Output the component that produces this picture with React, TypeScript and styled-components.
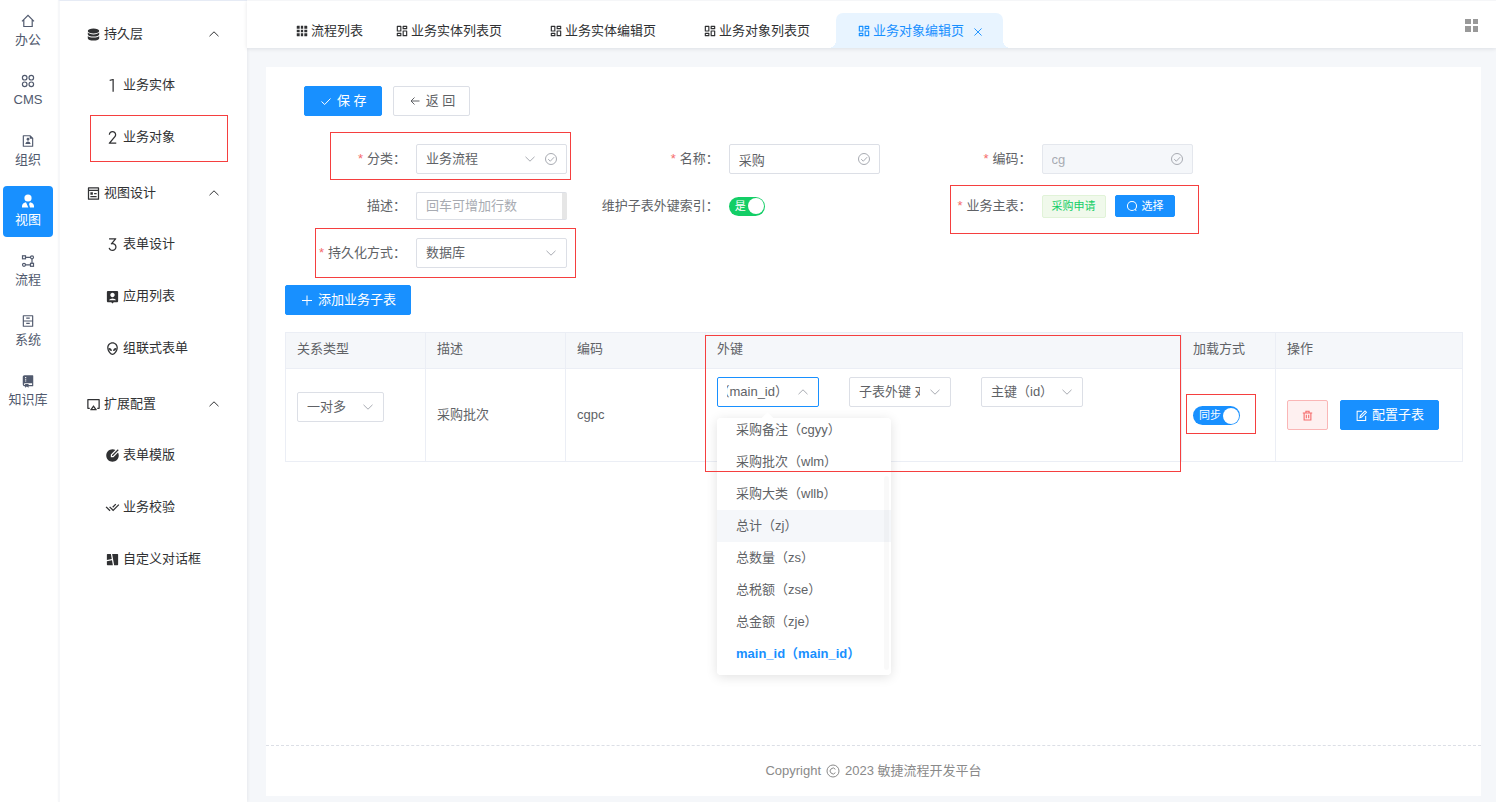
import React, { useState } from "react";
import styled, { createGlobalStyle, css } from "styled-components";
import {
  RiAccountPinBoxFill,
  RiAirplayLine,
  RiAliensLine,
  RiArchiveDrawerLine,
  RiCheckDoubleLine,
  RiCollageFill,
  RiDashboardLine,
  RiEditCircleFill,
  RiFileUserLine,
  RiGitRepositoryFill,
  RiGridFill,
  RiNumber1,
  RiNumber2,
  RiNumber3,
  RiPagesLine,
} from "react-icons/ri";

const color = {
  primary: "#1890ff",
  success: "#13ce66",
  danger: "#f56c6c",
  mark: "#f53f3f",
  text: "#606266",
  dark: "#303133",
  muted: "#a8abb2",
  border: "#dcdfe6",
  line: "#ebeef5",
  page: "#f5f7fa",
};

const GlobalStyle = createGlobalStyle`
  * { box-sizing: border-box; }
  body {
    margin: 0;
    background: ${color.page};
    color: ${color.text};
    font: 13px/20px "Liberation Sans", "Noto Sans CJK SC", sans-serif;
  }
  button, input, select, textarea { font: inherit; color: inherit; }
  ul { list-style: none; margin: 0; padding: 0; }
  a { color: inherit; text-decoration: none; }
  svg { flex: none; display: block; }
`;

/* ---------- icons ---------- */

const Stroke = ({ size = 14, width = 1, children }: { size?: number; width?: number; children: React.ReactNode }) => (
  <svg
    width={size}
    height={size}
    viewBox="0 0 14 14"
    fill="none"
    stroke="currentColor"
    strokeWidth={width}
    aria-hidden="true"
  >
    {children}
  </svg>
);

const ChevronDown = () => <Stroke><path d="M2.500 4.800 7 9.200l4.500-4.400" /></Stroke>;
const ChevronUp = () => <Stroke><path d="M2.500 9.200 7 4.800l4.500 4.400" /></Stroke>;
const CheckIcon = () => <Stroke><path d="M2.500 7.500 5.700 10.500 11.500 4.500" /></Stroke>;
const BackIcon = () => <Stroke><path d="M11.500 7H3M6.500 3.500 3 7l3.500 3.500" /></Stroke>;
const PlusIcon = () => <Stroke><path d="M7 2.500v10M2 7.500h10" /></Stroke>;
const CloseIcon = () => <Stroke size={10} width={1.3}><path d="M2 2l10 10M12 2 2 12" /></Stroke>;
const CircleCheck = () => (
  <Stroke>
    <circle cx="7" cy="7" r="5.500" />
    <path d="M4.200 7.200 6.300 9.200l3.800-4" />
  </Stroke>
);
const SearchIcon = () => (
  <Stroke size={12} width={1.2}>
    <circle cx="7" cy="7" r="5.300" />
    <path d="M10.500 10.800 12 12.400" />
  </Stroke>
);
const TrashIcon = () => (
  <Stroke size={11} width={1.4}>
    <path d="M1 3.800h12M5 3.800V1.500h4v2.300M2.700 3.800v9h8.600v-9M5.500 6v4.500M8.500 6v4.500" />
  </Stroke>
);
const EditIcon = () => (
  <Stroke size={13} width={1.1}>
    <path d="M7.500 2.500H2.300v9.800h9.200V7.500M5.300 9.300l.4-2L10.800 2 12.300 3.500 7.200 8.700z" />
  </Stroke>
);
const HomeIcon = () => (
  <Stroke width={1.200}>
    <path d="M1 7.300 7 1.300l6 6M2.800 6v6.500h8.400V6" />
  </Stroke>
);
const CirclesIcon = () => (
  <Stroke width={1.200}>
    <circle cx="3.700" cy="3.700" r="2.300" />
    <circle cx="10.300" cy="3.700" r="2.300" />
    <circle cx="3.700" cy="10.300" r="2.300" />
    <circle cx="10.300" cy="10.300" r="2.300" />
  </Stroke>
);
const FlowIcon = () => (
  <Stroke width={1.200}>
    <rect x="1.500" y="1.800" width="3" height="3" />
    <circle cx="11" cy="3.300" r="1.500" />
    <circle cx="3" cy="10.800" r="1.500" />
    <rect x="9.500" y="9.300" width="3" height="3" />
    <path d="M4.500 3.300h5M11 4.800v4.500M4.500 10.800h5" />
  </Stroke>
);
const PersonIcon = () => (
  <svg width="14" height="14" viewBox="0 0 14 14" fill="currentColor" aria-hidden="true">
    <circle cx="7" cy="4" r="3.600" />
    <path d="M5 8.200 7.300 13.500H1V12c0-2 1.800-3.600 4-3.800zM9 8.200 8 10l1 3.500h4V12c0-2-1.800-3.600-4-3.800z" />
  </svg>
);
const DisksIcon = () => (
  <svg width="15" height="15" viewBox="0 0 15 15" fill="currentColor" aria-hidden="true">
    <ellipse cx="7.500" cy="3.900" rx="5.700" ry="2.500" />
    <path d="M1.800 5.600c1 1.200 3.200 1.800 5.700 1.800s4.700-.6 5.700-1.800v1.600c0 1.300-2.500 2.400-5.700 2.400S1.800 8.500 1.800 7.200zM1.800 8.900c1 1.100 3.200 1.700 5.700 1.700s4.700-.6 5.700-1.700v2.300c0 1.300-2.500 2.400-5.700 2.400s-5.700-1.100-5.700-2.400z" />
  </svg>
);
const CopyrightIcon = () => (
  <Stroke>
    <circle cx="7" cy="7" r="6" />
    <path d="M9.400 5.300a2.900 2.900 0 1 0 0 3.400" />
  </Stroke>
);
const TilesIcon = () => (
  <svg width="13" height="13" viewBox="0 0 13 13" fill="#999" aria-hidden="true">
    <path d="M0 0h6v5H0zM8 0h5v5H8zM0 7h6v6H0zM8 7h5v6H8z" />
  </svg>
);

/* ---------- shell ---------- */

const Shell = styled.div`
  display: flex;
  min-height: 100vh;
`;

const Rail = styled.nav`
  display: flex;
  flex-direction: column;
  gap: 9px;
  width: 58px;
  flex: none;
  padding: 6px 5px 6px 3px;
  background: #fff;
`;

const RailLink = styled.a<{ $active?: boolean }>`
  display: flex;
  flex-direction: column;
  align-items: center;
  gap: 2px;
  height: 51px;
  padding-top: 8px;
  border-radius: 4px;
  color: ${(p) => (p.$active ? "#fff" : "#515a6e")};
  background: ${(p) => (p.$active ? color.primary : "transparent")};
`;

const Side = styled.nav`
  width: 189px;
  flex: none;
  padding-top: 8px;
  background: #fff;
  border-top: 1px solid #e6ebf5;
  border-left: 2px solid #f6f7f9;
  box-shadow: 1px 0 3px rgba(0, 21, 41, 0.06);
  color: ${color.dark};
`;

const Group = styled.section`
  margin-bottom: 5px;
`;

const GroupHead = styled.button`
  display: flex;
  align-items: center;
  gap: 3px;
  width: 100%;
  height: 50px;
  padding: 0 26px;
  border: 0;
  background: none;
  text-align: left;
  span { flex: 1; }
`;

const SideLink = styled.a`
  position: relative;
  display: flex;
  align-items: center;
  gap: 3px;
  height: 52px;
  padding-left: 45px;
`;

const Marker = styled.i<{ $inset: string }>`
  position: absolute;
  inset: ${(p) => p.$inset};
  border: 1px solid ${color.mark};
  pointer-events: none;
  z-index: 5;
`;

const Column = styled.div`
  display: flex;
  flex-direction: column;
  flex: 1;
  min-width: 0;
`;

const TopBar = styled.header`
  display: flex;
  align-items: flex-end;
  justify-content: space-between;
  height: 48px;
  padding: 0 18px 0 32px;
  background: #fff;
  border-top: 1px solid #f5f6f8;
  box-shadow: 0 1px 4px rgba(0, 21, 41, 0.1);
`;

const Tabs = styled.nav`
  display: flex;
`;

const Tab = styled.a<{ $active?: boolean; $fixed?: boolean }>`
  position: relative;
  display: flex;
  align-items: center;
  gap: 2px;
  height: 35px;
  padding: 0 ${(p) => (p.$fixed ? 16 : 31)}px 0 16px;
  color: ${color.dark};
  white-space: nowrap;
  ${(p) =>
    p.$active &&
    css`
      margin-left: -5px;
      padding: 0 20px 0 21px;
      border-radius: 7px 7px 0 0;
      background: #e8f4ff;
      color: ${color.primary};
      &::before,
      &::after {
        content: "";
        position: absolute;
        bottom: 0;
        width: 8px;
        height: 8px;
      }
      &::before {
        right: 100%;
        background: radial-gradient(circle at 0 0, transparent 8px, #e8f4ff 8px);
      }
      &::after {
        left: 100%;
        background: radial-gradient(circle at 100% 0, transparent 8px, #e8f4ff 8px);
      }
    `}
`;

const IconButton = styled.button`
  display: flex;
  padding: 0;
  border: 0;
  background: none;
`;

const TabClose = styled(IconButton)`
  margin: 2px 0 0 7px;
`;

const TilesButton = styled(IconButton)`
  align-self: center;
  margin-top: 2px;
`;

const Main = styled.main`
  display: flex;
  flex: 1;
  padding: 19px 15px 6px 19px;
`;

const Card = styled.div`
  display: flex;
  flex-direction: column;
  flex: 1;
  min-width: 0;
  background: #fff;
`;

const Body = styled.div`
  flex: 1;
  padding: 19px 18px 19px 19px;
`;

const Footer = styled.footer`
  display: flex;
  align-items: center;
  justify-content: center;
  gap: 5px;
  height: 51px;
  border-top: 1px dashed #dcdfe6;
  color: #8a8a8a;
`;

/* ---------- controls ---------- */

const Button = styled.button<{ $kind?: "primary" | "danger"; $small?: boolean }>`
  display: inline-flex;
  align-items: center;
  justify-content: center;
  gap: 4px;
  height: ${(p) => (p.$small ? 22 : 30)}px;
  padding: 0 ${(p) => (p.$small ? 10 : 14)}px;
  font-size: ${(p) => (p.$small ? 11 : 13)}px;
  border: 1px solid ${color.border};
  border-radius: 2px;
  background: #fff;
  white-space: nowrap;
  ${(p) =>
    p.$kind === "primary" &&
    css`
      border-color: ${color.primary};
      background: ${color.primary};
      color: #fff;
    `}
  ${(p) =>
    p.$kind === "danger" &&
    css`
      border-color: #fab6b6;
      background: #fef0f0;
      color: ${color.danger};
    `}
`;

const Toolbar = styled.div`
  display: flex;
  gap: 11px;
  margin: 0 0 28px 19px;
  button { min-width: 77px; }
`;

const FormGrid = styled.form`
  display: grid;
  grid-template-columns: repeat(3, 26.55%);
  gap: 17px 0;
  margin-bottom: 17px;
`;

const Field = styled.div`
  position: relative;
  display: flex;
  align-items: center;
  width: 282px;
  height: 30px;
`;

const FieldLabel = styled.label<{ $required?: boolean }>`
  flex: none;
  width: 131px;
  padding-right: 10px;
  text-align: right;
  white-space: nowrap;
  ${(p) =>
    p.$required &&
    css`
      &::before {
        content: "*";
        margin-right: 4px;
        color: ${color.danger};
      }
    `}
`;

const Box = styled.div<{ $width: number }>`
  position: relative;
  width: ${(p) => p.$width}px;
  flex: none;
`;

const Adornment = styled.span`
  position: absolute;
  top: 8px;
  right: 9px;
  display: flex;
  gap: 7px;
  color: ${color.muted};
  pointer-events: none;
`;

const control = css`
  display: block;
  width: 100%;
  height: 30px;
  margin: 0;
  padding: 0 30px 0 9px;
  border: 1px solid ${color.border};
  border-radius: 2px;
  background: #fff;
  outline: none;
  appearance: none;
`;

const SelectInput = styled.select`${control}`;

const TextInput = styled.input`
  ${control}
  &:disabled {
    border-color: #e4e7ed;
    background: ${color.page};
    color: ${color.muted};
  }
`;

const AreaInput = styled.textarea`
  ${control}
  height: 28px;
  padding: 3px 9px;
  border-right: 0;
  background: linear-gradient(#e6e6e6, #e6e6e6) right / 5px 100% no-repeat #fff;
  resize: none;
  overflow: hidden;
  &::placeholder { color: ${color.muted}; }
`;

const Combo = styled.button`
  ${control}
  display: flex;
  border-color: ${color.primary};
  span {
    display: flex;
    flex: 1;
    min-width: 0;
    justify-content: flex-end;
    overflow: hidden;
    white-space: nowrap;
    line-height: 28px;
  }
`;

const SwitchLabel = styled.label<{ $tone: string }>`
  position: relative;
  display: inline-flex;
  align-items: center;
  gap: 2px;
  height: 19px;
  padding: 0 1px 0 6px;
  border-radius: 10px;
  background: ${(p) => p.$tone};
  color: #fff;
  font-size: 11px;
  line-height: 19px;
  input {
    position: absolute;
    inset: 0;
    margin: 0;
    opacity: 0;
  }
  &::after {
    content: "";
    width: 16px;
    height: 16px;
    border-radius: 50%;
    background: #fff;
  }
`;

const Tag = styled.span`
  height: 23px;
  margin-right: 9px;
  padding: 0 9px;
  border: 1px solid #e1f3d8;
  border-radius: 2px;
  background: #f0f9eb;
  color: ${color.success};
  font-size: 11px;
  line-height: 21px;
  white-space: nowrap;
`;

/* ---------- table ---------- */

const Grid = styled.table`
  width: 100%;
  margin-top: 17px;
  table-layout: fixed;
  border-spacing: 0;
  border-top: 1px solid ${color.line};
  border-left: 1px solid ${color.line};
`;

const Th = styled.th<{ $width?: number }>`
  width: ${(p) => (p.$width ? `${p.$width}px` : "auto")};
  height: 36px;
  padding: 0 11px 3px;
  border-right: 1px solid ${color.line};
  border-bottom: 1px solid ${color.line};
  background: ${color.page};
  font-weight: 400;
  text-align: left;
`;

const Td = styled.td`
  position: relative;
  padding: 8px 11px;
  border-right: 1px solid ${color.line};
  border-bottom: 1px solid ${color.line};
`;

const KeyRow = styled.div`
  display: flex;
  gap: 30px;
  height: 76px;
`;

const TypeCell = styled.div`
  padding-bottom: 17px;
`;

const Actions = styled.div`
  display: flex;
  gap: 12px;
`;

const SwitchSlot = styled.div`
  position: relative;
  display: inline-flex;
  vertical-align: middle;
`;

const Panel = styled.div`
  position: absolute;
  top: 41px;
  left: 0;
  z-index: 3;
  width: 174px;
  border-radius: 4px;
  background: #fff;
  box-shadow: 0 2px 12px rgba(0, 0, 0, 0.12);
  &::before {
    content: "";
    position: absolute;
    top: -4px;
    left: 46px;
    width: 9px;
    height: 9px;
    background: #fff;
    transform: rotate(45deg);
  }
`;

const Options = styled.ul`
  position: relative;
  height: 257px;
  overflow: hidden;
  border-radius: 4px;
  background: #fff;
  &::after {
    content: "";
    position: absolute;
    right: 2px;
    top: 58px;
    bottom: 5px;
    width: 5px;
    border-radius: 3px;
    background: rgba(0, 0, 0, 0.025);
  }
`;

const Option = styled.li<{ $hover?: boolean; $selected?: boolean }>`
  height: 32px;
  padding-left: 19px;
  line-height: 32px;
  background: ${(p) => (p.$hover ? color.page : "transparent")};
  color: ${(p) => (p.$selected ? color.primary : "inherit")};
  font-weight: ${(p) => (p.$selected ? 700 : 400)};
  &:first-child { margin-top: -4px; }
`;

/* ---------- data ---------- */

const railItems = [
  { text: "办公", icon: <HomeIcon /> },
  { text: "CMS", icon: <CirclesIcon /> },
  { text: "组织", icon: <RiFileUserLine size={14} /> },
  { text: "视图", icon: <PersonIcon />, active: true },
  { text: "流程", icon: <FlowIcon /> },
  { text: "系统", icon: <RiArchiveDrawerLine size={14} /> },
  { text: "知识库", icon: <RiGitRepositoryFill size={14} /> },
];

const groups = [
  {
    title: "持久层",
    icon: <DisksIcon />,
    items: [
      { text: "业务实体", icon: <RiNumber1 size={15} /> },
      { text: "业务对象", icon: <RiNumber2 size={15} />, marked: true },
    ],
  },
  {
    title: "视图设计",
    icon: <RiPagesLine size={15} />,
    items: [
      { text: "表单设计", icon: <RiNumber3 size={15} /> },
      { text: "应用列表", icon: <RiAccountPinBoxFill size={15} /> },
      { text: "组联式表单", icon: <RiAliensLine size={15} /> },
    ],
  },
  {
    title: "扩展配置",
    icon: <RiAirplayLine size={15} />,
    items: [
      { text: "表单模版", icon: <RiEditCircleFill size={15} /> },
      { text: "业务校验", icon: <RiCheckDoubleLine size={15} /> },
      { text: "自定义对话框", icon: <RiCollageFill size={15} /> },
    ],
  },
];

const tabs = ["业务实体列表页", "业务实体编辑页", "业务对象列表页"];

const options = [
  "采购备注（cgyy）",
  "采购批次（wlm）",
  "采购大类（wllb）",
  "总计（zj）",
  "总数量（zs）",
  "总税额（zse）",
  "总金额（zje）",
  "main_id（main_id）",
];

/* ---------- parts ---------- */

interface PickProps {
  id?: string;
  label?: string;
  value: string;
  width: number;
  valid?: boolean;
}

const Pick = ({ id, label, value, width, valid }: PickProps) => (
  <Box $width={width}>
    <SelectInput id={id} aria-label={label}>
      <option>{value}</option>
    </SelectInput>
    <Adornment>
      <ChevronDown />
      {valid && <CircleCheck />}
    </Adornment>
  </Box>
);

interface SwitchProps {
  id?: string;
  label: string;
  tone: string;
  text: string;
}

const Switch = ({ id, label, tone, text }: SwitchProps) => {
  const [on, setOn] = useState(true);
  return (
    <SwitchLabel $tone={tone}>
      <input id={id} type="checkbox" role="switch" aria-label={label} checked={on} onChange={() => setOn(!on)} />
      {text}
    </SwitchLabel>
  );
};

export default function App() {
  return (
    <Shell>
      <GlobalStyle />
      <Rail>
        {railItems.map((r) => (
          <RailLink key={r.text} href="#" $active={r.active}>
            {r.icon}
            {r.text}
          </RailLink>
        ))}
      </Rail>
      <Side>
        {groups.map((g) => (
          <Group key={g.title}>
            <GroupHead type="button">
              {g.icon}
              <span>{g.title}</span>
              <ChevronUp />
            </GroupHead>
            {g.items.map((i) => (
              <SideLink key={i.text} href="#">
                {i.icon}
                {i.text}
                {i.marked && <Marker $inset="4px 19px 1px 30px" />}
              </SideLink>
            ))}
          </Group>
        ))}
      </Side>
      <Column>
        <TopBar>
          <Tabs>
            <Tab href="#" $fixed>
              <RiGridFill size={14} />
              流程列表
            </Tab>
            {tabs.map((t) => (
              <Tab key={t} href="#">
                <RiDashboardLine size={14} />
                {t}
              </Tab>
            ))}
            <Tab href="#" $active>
              <RiDashboardLine size={14} />
              业务对象编辑页
              <TabClose type="button" aria-label="关闭">
                <CloseIcon />
              </TabClose>
            </Tab>
          </Tabs>
          <TilesButton type="button" aria-label="标签操作">
            <TilesIcon />
          </TilesButton>
        </TopBar>
        <Main>
          <Card>
            <Body>
              <Toolbar>
                <Button type="button" $kind="primary">
                  <CheckIcon />
                  保 存
                </Button>
                <Button type="button">
                  <BackIcon />
                  返 回
                </Button>
              </Toolbar>
              <FormGrid>
                <Field>
                  <FieldLabel htmlFor="category" $required>分类：</FieldLabel>
                  <Pick id="category" value="业务流程" width={151} valid />
                  <Marker $inset="-12px -4px -6px 45px" />
                </Field>
                <Field>
                  <FieldLabel htmlFor="name" $required>名称：</FieldLabel>
                  <Box $width={151}>
                    <TextInput id="name" defaultValue="采购" />
                    <Adornment><CircleCheck /></Adornment>
                  </Box>
                </Field>
                <Field>
                  <FieldLabel htmlFor="code" $required>编码：</FieldLabel>
                  <Box $width={151}>
                    <TextInput id="code" defaultValue="cg" disabled />
                    <Adornment><CircleCheck /></Adornment>
                  </Box>
                </Field>
                <Field>
                  <FieldLabel htmlFor="desc">描述：</FieldLabel>
                  <Box $width={151}>
                    <AreaInput id="desc" rows={1} placeholder="回车可增加行数" />
                  </Box>
                </Field>
                <Field>
                  <FieldLabel htmlFor="fk-index">维护子表外键索引：</FieldLabel>
                  <Switch id="fk-index" label="维护子表外键索引" tone={color.success} text="是" />
                </Field>
                <Field>
                  <FieldLabel as="span" $required>业务主表：</FieldLabel>
                  <Tag>采购申请</Tag>
                  <Button type="button" $kind="primary" $small>
                    <SearchIcon />
                    选择
                  </Button>
                  <Marker $inset="-6px -6px -13px 39px" />
                </Field>
                <Field>
                  <FieldLabel htmlFor="persist" $required>持久化方式：</FieldLabel>
                  <Pick id="persist" value="数据库" width={151} />
                  <Marker $inset="-10px -9px -10px 30px" />
                </Field>
              </FormGrid>
              <Button type="button" $kind="primary">
                <PlusIcon />
                添加业务子表
              </Button>
              <Grid>
                <thead>
                  <tr>
                    <Th $width={140}>关系类型</Th>
                    <Th $width={140}>描述</Th>
                    <Th $width={140}>编码</Th>
                    <Th>外键</Th>
                    <Th $width={94}>加载方式</Th>
                    <Th $width={187}>操作</Th>
                  </tr>
                </thead>
                <tbody>
                  <tr>
                    <Td>
                      <TypeCell>
                        <Pick label="关系类型" value="一对多" width={87} />
                      </TypeCell>
                    </Td>
                    <Td>采购批次</Td>
                    <Td>cgpc</Td>
                    <Td>
                      <KeyRow>
                        <Box $width={102}>
                          <Combo type="button" aria-haspopup="listbox" aria-expanded="true">
                            <span>main_id（main_id）</span>
                          </Combo>
                          <Adornment><ChevronUp /></Adornment>
                          <Panel>
                            <Options role="listbox">
                              {options.map((o, i) => (
                                <Option
                                  key={o}
                                  role="option"
                                  aria-selected={i === 7}
                                  $hover={i === 3}
                                  $selected={i === 7}
                                >
                                  {o}
                                </Option>
                              ))}
                            </Options>
                          </Panel>
                        </Box>
                        <Pick label="子表外键" value="子表外键 对应" width={102} />
                        <Pick label="主键" value="主键（id）" width={102} />
                      </KeyRow>
                      <Marker $inset="-34px 0 -11px -1px" />
                    </Td>
                    <Td>
                      <SwitchSlot>
                        <Switch label="加载方式" tone={color.primary} text="同步" />
                        <Marker $inset="-12px -16px -9px -7px" />
                      </SwitchSlot>
                    </Td>
                    <Td>
                      <Actions>
                        <Button type="button" $kind="danger" aria-label="删除">
                          <TrashIcon />
                        </Button>
                        <Button type="button" $kind="primary">
                          <EditIcon />
                          配置子表
                        </Button>
                      </Actions>
                    </Td>
                  </tr>
                </tbody>
              </Grid>
            </Body>
            <Footer>
              Copyright
              <CopyrightIcon />
              2023 敏捷流程开发平台
            </Footer>
          </Card>
        </Main>
      </Column>
    </Shell>
  );
}
